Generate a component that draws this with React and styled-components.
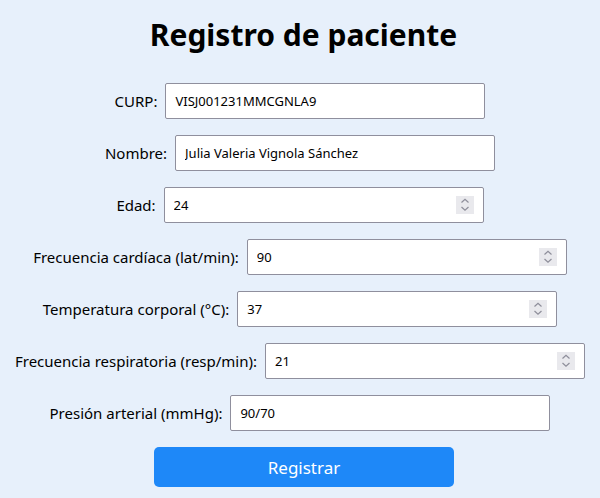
import React from 'react';
import styled, { createGlobalStyle } from 'styled-components';

const GlobalStyle = createGlobalStyle`
  body {
    margin: 0;
    background: #e7f0fb;
    font-family: 'Noto Sans', 'Open Sans', sans-serif;
    color: #000000;
  }
`;

const Page = styled.div`
  display: flex;
  flex-direction: column;
  align-items: center;
  padding-top: 15px;
`;

const Title = styled.h1`
  margin: 0 0 28px 7px;
  font-size: 30px;
  line-height: 40px;
  font-weight: 700;
`;

const Form = styled.form`
  display: flex;
  flex-direction: column;
  align-items: center;
  gap: 16px;
`;

const Row = styled.div`
  display: flex;
  align-items: center;
  gap: 8px;
`;

const Label = styled.label`
  font-size: 15px;
  white-space: nowrap;
`;

const Box = styled.div`
  width: 320px;
  height: 36px;
  box-sizing: border-box;
  display: flex;
  align-items: center;
  background: #ffffff;
  border: 1px solid #8f8f9d;
  border-radius: 2px;
  padding: 0 9px 0 9px;
`;

const Field = styled.input`
  flex: 1;
  min-width: 0;
  border: none;
  outline: none;
  background: transparent;
  padding: 0;
  font-family: 'Noto Sans', sans-serif;
  font-size: 13px;
  color: #000000;
`;

const SpinBox = styled.span`
  display: flex;
  width: 18px;
  height: 18px;
  background: #e9e9ed;
`;

const Button = styled.button`
  width: 300px;
  height: 40px;
  margin-left: 8px;
  border: none;
  border-radius: 5px;
  background: #1e88f8;
  color: #ffffff;
  font-family: 'Noto Sans', sans-serif;
  font-size: 17px;
`;

const Spinner = () => (
  <SpinBox>
    <svg width="18" height="18" viewBox="0 0 18 18" fill="none" stroke="#8e8e9a" strokeWidth="1.2">
      <path d="M5.5 6.5 L9 3.2 L12.5 6.5" />
      <path d="M5.5 11 L9 14.3 L12.5 11" />
    </svg>
  </SpinBox>
);

const fields = [
  { label: 'CURP:', value: 'VISJ001231MMCGNLA9' },
  { label: 'Nombre:', value: 'Julia Valeria Vignola Sánchez' },
  { label: 'Edad:', value: '24', number: true },
  { label: 'Frecuencia cardíaca (lat/min):', value: '90', number: true },
  { label: 'Temperatura corporal (°C):', value: '37', number: true },
  { label: 'Frecuencia respiratoria (resp/min):', value: '21', number: true },
  { label: 'Presión arterial (mmHg):', value: '90/70' },
];

const App = () => (
  <>
    <GlobalStyle />
    <Page>
      <Title>Registro de paciente</Title>
      <Form onSubmit={(e) => e.preventDefault()}>
        {fields.map(({ label, value, number }) => (
          <Row key={label}>
            <Label>{label}</Label>
            <Box>
              <Field type="text" defaultValue={value} />
              {number && <Spinner />}
            </Box>
          </Row>
        ))}
        <Button type="submit">Registrar</Button>
      </Form>
    </Page>
  </>
);

export default App;
